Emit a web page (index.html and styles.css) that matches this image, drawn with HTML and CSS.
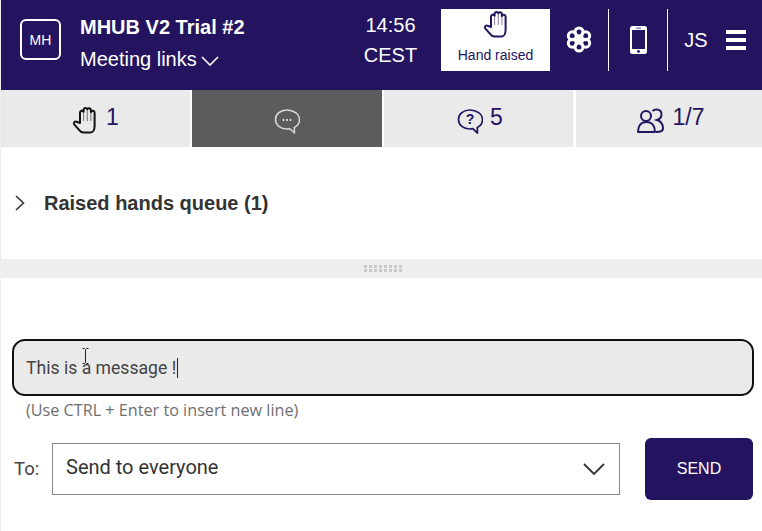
FILE: index.html
```html
<!DOCTYPE html>
<html lang="en">
<head>
<meta charset="utf-8">
<title>Meeting</title>
<link rel="stylesheet" href="styles.css">
</head>
<body>
<svg class="defs" width="0" height="0" aria-hidden="true">
  <symbol id="hand" viewBox="0 0 26 28">
    <path d="M8 17V6.500a1.900 1.900 0 0 1 3.600-.8V3.600a1.900 1.900 0 0 1 3.700-.3 1.900 1.900 0 0 1 3.600 .9v1.900a1.900 1.900 0 0 1 3.700 .7V20c0 3.600-1.500 6.500-4 6.500H11.500c-1.800 0-2.900-.8-4-2.200L2.200 18.300c-1.100-1.500 .6-3.500 2.400-2.500Z" fill="none" stroke="currentColor" stroke-width="2" stroke-linejoin="round"/>
    <path d="M11.600 5.500V15M15.300 3.500V15M18.900 5V15" fill="none" stroke="currentColor" stroke-width="1" opacity=".55"/>
  </symbol>
</svg>
<header class="topbar">
  <div class="logo">MH</div>
  <div class="title">
    <div class="name">MHUB V2 Trial #2</div>
    <div class="links">Meeting links
      <svg class="links-chev" viewBox="0 0 18 10"><path d="M1 1l8 8 8-8" fill="none" stroke="currentColor" stroke-width="1.600"/></svg>
    </div>
  </div>
  <div class="clock"><div>14:56</div><div>CEST</div></div>
  <div class="raised">
    <svg class="raised-icon"><use href="#hand"/></svg>
    <span class="raised-label">Hand raised</span>
  </div>
  <div class="tool tool-flower">
    <svg viewBox="0 0 26 27" width="26" height="27">
      <g fill="none" stroke="#fff" stroke-width="3">
        <circle cx="13" cy="6" r="4"/><circle cx="19.700" cy="9.800" r="4"/><circle cx="19.700" cy="17.200" r="4"/><circle cx="13" cy="21" r="4"/><circle cx="6.300" cy="17.200" r="4"/><circle cx="6.300" cy="9.800" r="4"/>
      </g>
      <circle cx="13" cy="13.500" r="2.800" fill="#fff"/>
    </svg>
  </div>
  <div class="tool tool-phone">
    <svg viewBox="0 0 17 28" width="17" height="28">
      <rect width="17" height="28" rx="2.500" fill="#fff"/>
      <rect x="2" y="4" width="13" height="19" fill="#24145f"/>
      <circle cx="8.500" cy="25.500" r="1.400" fill="#24145f"/>
      <rect x="6" y="1.700" width="5" height=".8" fill="#24145f"/>
    </svg>
  </div>
  <div class="user">JS</div>
  <div class="burger"><i></i><i></i><i></i></div>
</header>
<nav class="tabs">
  <div class="tab tab-hands">
    <svg class="tab-hand"><use href="#hand"/></svg><span>1</span>
  </div>
  <div class="tab tab-active">
    <svg viewBox="0 0 26 26" width="26" height="26">
      <path d="M13 2C6.500 2 1.500 6 1.500 11.500S6.500 21 13 21c1.100 0 1.900-.1 2.800-.3L20.500 25l-.2-5.500c3.400-1.700 5.200-4.600 5.200-8C25.500 6 19.500 2 13 2Z" fill="none" stroke="#d8d8d8" stroke-width="1.500" stroke-linejoin="round"/>
      <circle cx="9.500" cy="12" r=".9" fill="#fff"/><circle cx="13" cy="12" r=".9" fill="#fff"/><circle cx="16.500" cy="12" r=".9" fill="#fff"/>
    </svg>
  </div>
  <div class="tab tab-questions">
    <svg viewBox="0 0 26 26" width="26" height="26">
      <path d="M13 2C6.500 2 1.500 6 1.500 11.500S6.500 21 13 21c1.100 0 1.900-.1 2.800-.3L20.500 25l-.2-5.500c3.400-1.700 5.200-4.600 5.200-8C25.500 6 19.500 2 13 2Z" fill="none" stroke="#24145f" stroke-width="1.700" stroke-linejoin="round"/>
      <text x="13" y="16" text-anchor="middle" class="q-mark">?</text>
    </svg><span>5</span>
  </div>
  <div class="tab tab-people">
    <svg viewBox="0 0 29 25" width="29" height="25">
      <g fill="none" stroke="#24145f" stroke-width="2">
        <circle cx="9" cy="8" r="5"/>
        <path d="M1 24c0-6 3-10 8.500-10S18 18 18 24Z" stroke-linejoin="round"/>
        <path d="M15.500 3c1-1 2.500-1.500 4-1.500 3 0 5 2 5 5 0 2.500-1.500 4.500-4.500 5.500 3.500 1 6 4 6 8.500 0 2.500-2 3.500-7 3.500"/>
      </g>
    </svg><span>1/7</span>
  </div>
</nav>
<section class="queue">
  <svg class="queue-chev" viewBox="0 0 10 16"><path d="M1 1l7.500 7L1 15" fill="none" stroke="#333" stroke-width="1.600"/></svg>
  <h2 class="queue-title">Raised hands queue (1)</h2>
</section>
<div class="splitter"><div class="grip"></div></div>
<section class="composer">
  <div class="message">This is a message !<span class="caret"></span></div>
  <div class="hint">(Use CTRL + Enter to insert new line)</div>
  <div class="send-row">
    <span class="to">To:</span>
    <div class="select">
      <span>Send to everyone</span>
      <svg class="select-chev" viewBox="0 0 22 13"><path d="M1 1l10 10L21 1" fill="none" stroke="#333" stroke-width="1.800"/></svg>
    </div>
    <button class="send" type="button">SEND</button>
  </div>
</section>
<svg class="ibeam" viewBox="0 0 7 16" width="7" height="16"><path d="M.5 .5h2l1 1 1-1h2M3.500 1.500v13M.5 15.500h2l1-1 1 1h2" fill="none" stroke="#222" stroke-width="1"/></svg>
</body>
</html>
```
FILE: styles.css
```css
* { box-sizing: border-box; }
html, body { margin: 0; height: 100%; }
body {
  position: relative;
  width: 762px;
  height: 531px;
  overflow: hidden;
  background: #fff;
  border-left: 1px solid #eee;
  font-family: "Liberation Sans", Arial, sans-serif;
  color: #333;
}
.defs { position: absolute; }

.topbar {
  display: flex;
  height: 90px;
  background: #24145f;
  color: #fff;
  align-items: flex-start;
}
.logo {
  width: 41px;
  height: 41px;
  margin: 19px 0 0 19px;
  border: 2px solid #fff;
  border-radius: 6px;
  display: flex;
  align-items: center;
  justify-content: center;
  font-size: 14px;
}
.title { margin: 14px 0 0 19px; width: 260px; }
.name { font-size: 20px; font-weight: 700; line-height: 26px; }
.links { font-size: 20px; line-height: 26px; margin-top: 6px; display: flex; align-items: center; gap: 4px; }
.links-chev { width: 18px; height: 10px; margin-top: 4px; }
.clock { width: 101px; margin-top: 10px; font-size: 20px; line-height: 30px; text-align: center; }
.raised {
  width: 109px;
  height: 62px;
  margin: 9px 0 0 0;
  background: #fff;
  color: #24145f;
  display: flex;
  flex-direction: column;
  align-items: center;
}
.raised-icon { width: 26px; height: 28px; margin-top: 1px; }
.raised-label { font-size: 14px; line-height: 16px; margin-top: 9px; }
.tool { height: 62px; margin-top: 9px; display: flex; align-items: center; justify-content: center; }
.tool-flower { width: 59px; border-right: 1px solid #fff; padding-bottom: 1px; }
.tool-phone { width: 59px; border-right: 1px solid #fff; padding-bottom: 1px; }
.user { width: 56px; margin: 28px 2px 0 0; font-size: 20px; line-height: 24px; text-align: center; }
.burger { width: 20px; margin-top: 30px; display: flex; flex-direction: column; gap: 4px; }
.burger i { display: block; height: 4px; background: #fff; }

.tabs { display: flex; height: 57px; gap: 2px; }
.tab {
  height: 57px;
  background: #eaeaea;
  color: #24145f;
  display: flex;
  align-items: center;
  justify-content: center;
  gap: 7px;
  font-size: 23px;
}
.tab span { line-height: 23px; margin-top: -3px; }
.tab-hands { width: 189px; gap: 8px; color: #24145f; }
.tab-hand { width: 26px; height: 28px; color: #111; margin-top: 3px; }
.tab-active { width: 190px; background: #5c5c5c; }
.tab-questions { width: 189px; gap: 7px; padding-left: 3px; }
.tab-people { width: 186px; margin-left: 1px; padding-left: 3px; }
.tab-active svg, .tab-questions svg, .tab-people svg { margin-top: 4px; }
.q-mark { font: 700 14px "Liberation Sans", Arial, sans-serif; fill: #24145f; }

.queue {
  height: 112px;
  display: flex;
  align-items: center;
  padding-left: 14px;
}
.queue-chev { width: 10px; height: 16px; }
.queue-title {
  margin: 0 0 0 19px;
  font: 700 20px/24px "Liberation Sans", Arial, sans-serif;
  color: #333;
}
.splitter {
  height: 19px;
  background: #eee;
  display: flex;
  justify-content: center;
  align-items: center;
}
.grip {
  position: relative;
  width: 38px;
  height: 7px;
  margin-left: 3px;
  background: repeating-linear-gradient(90deg, #c8c8c8 0 3px, transparent 3px 5px);
}
.grip::after {
  content: "";
  position: absolute;
  left: 0;
  right: 0;
  top: 3px;
  height: 1px;
  background: #eee;
}

.composer { padding: 61px 8px 0 11px; }
.message {
  height: 57px;
  background: #eaeaea;
  border: 2px solid #111;
  border-radius: 13px;
  padding: 0 12px;
  font: 17.600px/54px Roboto, "Liberation Sans", sans-serif;
  color: #444;
  display: flex;
  align-items: center;
}
.caret { width: 1px; height: 20px; background: #222; margin-left: 1px; }
.hint {
  margin: 4px 0 0 14px;
  font: 16.200px/20px "Open Sans", sans-serif;
  color: #6f6f6f;
}
.send-row { display: flex; margin-top: 18px; align-items: center; }
.to { width: 40px; padding-left: 2px; font: 18.500px/24px Roboto, sans-serif; color: #444; margin-top: -1px; }
.select {
  width: 568px;
  height: 52px;
  border: 1px solid #888;
  display: flex;
  align-items: center;
  justify-content: space-between;
  padding: 0 14px 0 13px;
  font: 20px/24px Roboto, sans-serif;
  color: #333;
}
.select span { margin-top: -5px; }
.select-chev { width: 22px; height: 13px; }
.send {
  width: 108px;
  height: 62px;
  margin: 0 0 0 25px;
  border: 0;
  border-radius: 6px;
  background: #24145f;
  color: #fff;
  font: 16px "Liberation Sans", Arial, sans-serif;
}
.ibeam { position: absolute; left: 81px; top: 348px; }
```
